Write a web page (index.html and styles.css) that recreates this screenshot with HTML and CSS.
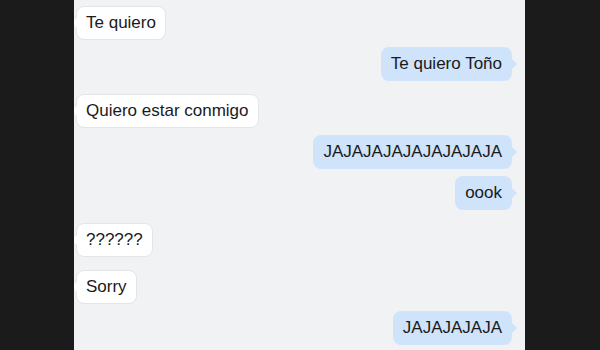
FILE: index.html
```html
<!DOCTYPE html>
<html lang="es">
<head>
    <meta charset="UTF-8">
    <meta name="viewport" content="width=device-width, initial-scale=1.0">
    <title>Mensajes</title>
    <link rel="stylesheet" href="styles.css">
</head>
<body>
    <div class="screen">
        <div class="thread">
            <div class="msg in first"><span class="bubble">Te quiero</span></div>
            <div class="msg out near"><span class="bubble">Te quiero Toño</span></div>
            <div class="msg in far"><span class="bubble">Quiero estar conmigo</span></div>
            <div class="msg out near"><span class="bubble">JAJAJAJAJAJAJAJAJA</span></div>
            <div class="msg out near"><span class="bubble">oook</span></div>
            <div class="msg in far"><span class="bubble">??????</span></div>
            <div class="msg in far"><span class="bubble">Sorry</span></div>
            <div class="msg out near"><span class="bubble">JAJAJAJAJA</span></div>
        </div>
    </div>
</body>
</html>
```
FILE: styles.css
```css
*{
    margin: 0;
    padding: 0;
    box-sizing: border-box;
}
body{
    background-color: #1b1b1b;
    font-family: "Liberation Sans", Arial, sans-serif;
    height: 350px;
    overflow: hidden;
}
.screen{
    margin-left: 74px;
    width: 451px;
    height: 350px;
    background-color: #f1f2f4;
    overflow: hidden;
}
.thread{
    display: flex;
    flex-direction: column;
    padding: 6px 13px 0 2px;
}
.msg{
    display: flex;
}
.msg.out{
    justify-content: flex-end;
}
.msg.near{
    margin-top: 7px;
}
.msg.far{
    margin-top: 13px;
}
.bubble{
    position: relative;
    display: block;
    font-size: 17px;
    line-height: 22px;
    color: #1a1a1c;
    padding: 6px 10px 6px 10px;
    border-radius: 8px;
}
.in .bubble{
    background-color: #ffffff;
    border: 1px solid #e4e5e8;
    padding: 5px 9px 5px 9px;
}
.out .bubble{
    background-color: #cfe3fa;
}
.out .bubble::after{
    content: "";
    position: absolute;
    right: -5px;
    top: 50%;
    margin-top: -5px;
    border-left: 5px solid #cfe3fa;
    border-top: 5px solid transparent;
    border-bottom: 5px solid transparent;
}
.in .bubble::after{
    content: "";
    position: absolute;
    left: -5px;
    top: 50%;
    margin-top: -5px;
    border-right: 5px solid #ffffff;
    border-top: 5px solid transparent;
    border-bottom: 5px solid transparent;
}
```
